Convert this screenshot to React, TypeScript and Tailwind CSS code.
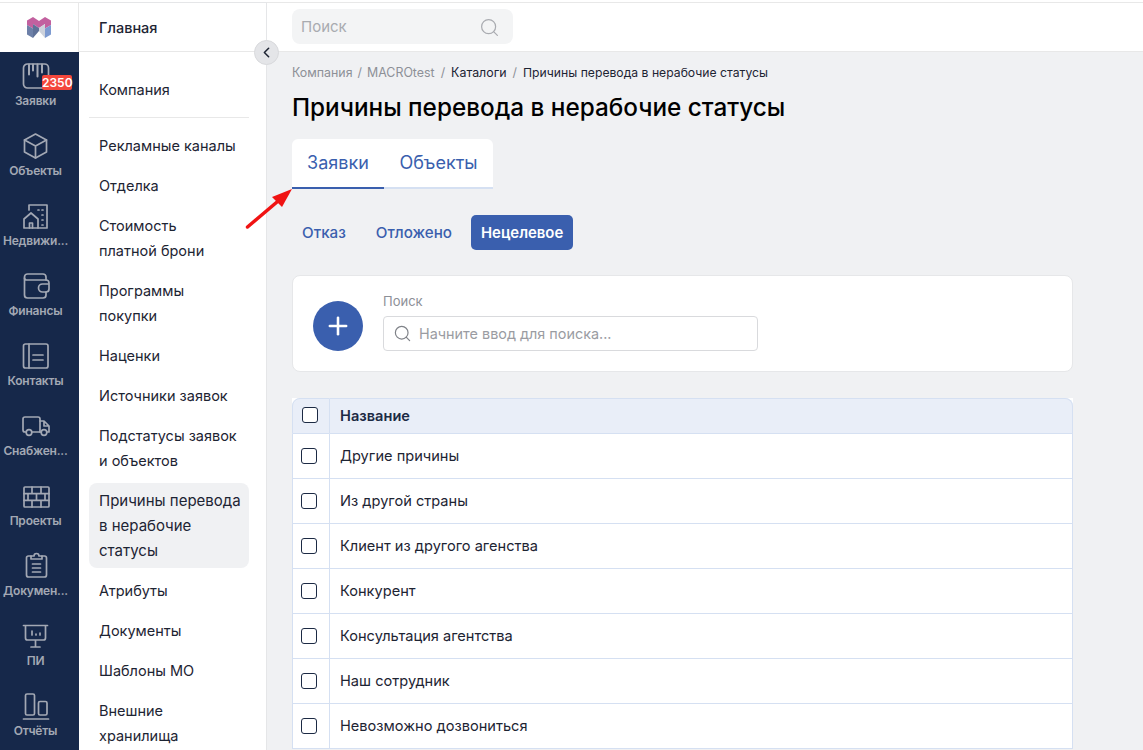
import { ChevronLeft, Plus, Search } from "lucide-react";
import type { ReactNode } from "react";

const iconProps = {
  width: 30,
  height: 30,
  viewBox: "0 0 30 30",
  fill: "none",
  stroke: "currentColor",
  strokeWidth: 1.7,
  strokeLinecap: "round" as const,
  strokeLinejoin: "round" as const,
};

const navItems: { label: string; badge?: string; icon: ReactNode }[] = [
  {
    label: "Заявки",
    badge: "2350",
    icon: (
      <svg {...iconProps}>
        <rect x="2.5" y="3" width="25" height="24" rx="4" />
        <path d="M8 3.5v10M12 3.5v6M16.5 3.5v12M21 3.5v8" strokeWidth="2" />
      </svg>
    ),
  },
  {
    label: "Объекты",
    icon: (
      <svg {...iconProps}>
        <path d="M14.5 3l11 6v12l-11 6-11-6V9z" />
        <path d="M3.5 9l11 6 11-6M14.5 15v12" />
      </svg>
    ),
  },
  {
    label: "Недвижи...",
    icon: (
      <svg {...iconProps}>
        <path d="M8 9V4h18v23H17" />
        <path d="M3 18l7-6 7 6v9H3z" />
        <path d="M8.5 27v-5h3v5M17 9h1M21 9h1M21 14h1M21 19h1M21 24h1" />
      </svg>
    ),
  },
  {
    label: "Финансы",
    icon: (
      <svg {...iconProps}>
        <path d="M25 9V6a3 3 0 0 0-3-3H6.5a3 3 0 0 0-3 3v18a3 3 0 0 0 3 3H22a3 3 0 0 0 3-3v-3" />
        <path d="M3.5 7a2 2 0 0 0 2 2H25a3 3 0 0 1 3 3v6a3 3 0 0 1-3 3h-3.500a4 4 0 0 1 0-8H28" />
      </svg>
    ),
  },
  {
    label: "Контакты",
    icon: (
      <svg {...iconProps}>
        <rect x="2.5" y="3" width="24.500" height="24" rx="2" />
        <path d="M8 3v24M12 14h10M12 19h10" />
      </svg>
    ),
  },
  {
    label: "Снабжен...",
    icon: (
      <svg {...iconProps}>
        <path d="M5 21H4a2 2 0 0 1-2-2V8a2 2 0 0 1 2-2h13a2 2 0 0 1 2 2v13h-8" />
        <path d="M19 10h4l5 5v6h-2M19 21h1M23 10v5h5" />
        <circle cx="8" cy="21.500" r="2.800" />
        <circle cx="23" cy="21.500" r="2.800" />
      </svg>
    ),
  },
  {
    label: "Проекты",
    icon: (
      <svg {...iconProps}>
        <rect x="3" y="6" width="25" height="20" rx="1" />
        <path d="M3 12.700h25M3 19.300h25M11 6v6.700M20 6v6.700M7 12.700v6.600M15.500 12.700v6.600M24 12.700v6.600M11 19.300V26M20 19.300V26" />
      </svg>
    ),
  },
  {
    label: "Докумен...",
    icon: (
      <svg {...iconProps}>
        <path d="M10 5H7.500a2 2 0 0 0-2 2v17a2 2 0 0 0 2 2h16a2 2 0 0 0 2-2V7a2 2 0 0 0-2-2H21" />
        <path d="M10 8V5h3a2.500 2.500 0 0 1 5 0h3v3z" />
        <path d="M11.500 13h8M11.500 17h8M11.500 21h8" />
      </svg>
    ),
  },
  {
    label: "ПИ",
    icon: (
      <svg {...iconProps}>
        <path d="M2.500 4.500h24M4.500 4.500v12.500a2 2 0 0 0 2 2h16a2 2 0 0 0 2-2V4.500M14.500 19v6.500M10 26h9" />
        <path d="M11 10v4M15 13v1M19 12v2" />
      </svg>
    ),
  },
  {
    label: "Отчёты",
    icon: (
      <svg {...iconProps}>
        <path d="M2.500 28h25" />
        <rect x="4.500" y="3" width="9" height="21" rx="1.500" />
        <rect x="17.500" y="10.500" width="8.500" height="13.500" rx="1.500" />
      </svg>
    ),
  },
];

const catalog = [
  ["Рекламные каналы"],
  ["Отделка"],
  ["Стоимость", "платной брони"],
  ["Программы", "покупки"],
  ["Наценки"],
  ["Источники заявок"],
  ["Подстатусы заявок", "и объектов"],
  ["Причины перевода", "в нерабочие", "статусы"],
  ["Атрибуты"],
  ["Документы"],
  ["Шаблоны МО"],
  ["Внешние", "хранилища"],
];

const reasons = [
  "Другие причины",
  "Из другой страны",
  "Клиент из другого агенства",
  "Конкурент",
  "Консультация агентства",
  "Наш сотрудник",
  "Невозможно дозвониться",
];

const Logo = () => (
  <svg width="26" height="21" viewBox="0 0 26 21">
    <path d="M1 3.500L7 0l6 4 6-4 6 3.500V8l-6 3.500V7l-6 4-6-4v4.500L1 8z" fill="#c2609f" />
    <path d="M1 8l6 3.500V21l-6-3.500z" fill="#6d80a8" />
    <path d="M7 7l6 4v3l-6 7z" fill="#5f7198" />
    <path d="M13 14l6 7V7l-6 4z" fill="#cdd2dc" />
    <path d="M19 11.500L25 8v9.500L19 21z" fill="#7d9ad0" />
  </svg>
);

const Checkbox = () => (
  <span className="block w-4 h-4 rounded-[3px] border-[1.5px] border-[#1c2a44] bg-white" />
);

export default function App() {
  return (
    <div className="relative flex h-screen w-full overflow-hidden bg-white pt-[2px] font-['Inter',sans-serif] text-[#1d2433]">
      <aside className="flex flex-col w-[79px] shrink-0">
        <div className="flex items-center justify-center h-[50px] shrink-0 bg-white border-t border-r border-[#e8e8e8]">
          <Logo />
        </div>
        <nav className="flex-1 bg-[#16284a]">
          {navItems.map((item) => (
            <div
              key={item.label}
              className="relative flex flex-col items-center h-[70px] pt-[9px] pr-[8px] text-[#a3a8b4]"
            >
              {item.icon}
              <span className="mt-[1px] text-xs leading-[18px] font-semibold tracking-[-0.2px] whitespace-nowrap">
                {item.label}
              </span>
              {item.badge && (
                <span className="absolute left-[42px] top-[23px] w-[30px] h-[15px] rounded-[2px] bg-[#f4473c] text-white text-xs leading-[15px] font-semibold text-center">
                  {item.badge}
                </span>
              )}
            </div>
          ))}
        </nav>
      </aside>

      <aside className="relative flex flex-col w-[188px] shrink-0 border-r border-t border-[#e5e6e8] text-[14.5px] leading-[25px]">
        <div className="flex items-center h-[49px] shrink-0 px-5 font-medium border-b border-[#e8e8e8]">Главная</div>
        <div className="ml-[10px] mr-[17px] px-[10px] pt-[25px] pb-[15px] border-b border-[#e8e8e8]">Компания</div>
        <ul className="flex flex-col gap-[5px] ml-[10px] mr-[17px] mt-[10px]">
          {catalog.map((lines) => (
            <li
              key={lines[0]}
              className={`px-[10px] py-[5px] rounded-lg ${lines.length === 3 ? "bg-[#f0f1f3] text-[15px]" : ""}`}
            >
              {lines.map((line) => (
                <div key={line} className="whitespace-nowrap">
                  {line}
                </div>
              ))}
            </li>
          ))}
        </ul>
        <button className="absolute right-[-13px] top-[37px] flex items-center justify-center w-[25px] h-[25px] rounded-full bg-[#e4e5e8] border border-[#d8d9dc]">
          <ChevronLeft size={17} strokeWidth={2.2} />
        </button>
      </aside>

      <div className="flex flex-col flex-1 min-w-0">
        <header className="flex items-center h-[50px] shrink-0 px-[25px] pb-[2px] bg-white border-t border-b border-[#e8e8e8]">
          <div className="flex items-center justify-between w-[221px] h-[35px] pl-[9px] pr-[13px] rounded-lg bg-[#f3f4f5] text-[15px] text-[#a9abb0]">
            <span className="pt-[2px]">Поиск</span>
            <Search size={21} strokeWidth={1.4} className="mt-[2px]" />
          </div>
        </header>

        <main className="flex-1 min-h-0 overflow-hidden bg-[#f0f1f3] pl-[25px] pr-[70px] pt-[12px]">
          <div className="flex gap-[5px] text-[12.4px] leading-[18px] text-[#8d9097]">
            <span>Компания</span>
            <span>/</span>
            <span>MACROtest</span>
            <span className="mx-[1px]">/</span>
            <span className="text-[#1d2433]">Каталоги</span>
            <span className="mx-[1px]">/</span>
            <span className="text-[12.2px] text-[#1d2433]">Причины перевода в нерабочие статусы</span>
          </div>
          <h1 className="mt-[9px] text-[24.3px] leading-[32px] font-medium text-black">
            Причины перевода в нерабочие статусы
          </h1>

          <div className="flex w-[201px] mt-[16px] rounded-t-md bg-white text-[18px] text-[#3a5fae]">
            <span className="flex items-center justify-center w-[92px] h-[50px] pb-[2px] border-b-2 border-[#3a5fae]">
              Заявки
            </span>
            <span className="flex items-center justify-center flex-1 h-[50px] pb-[2px] border-b-2 border-[#d5e0f2]">
              Объекты
            </span>
          </div>

          <div className="flex items-center gap-[10px] mt-[26px] text-[15.2px] font-medium text-[#3a5fae]">
            <span className="flex items-center h-[35px] pt-[1px] px-[10px]">Отказ</span>
            <span className="flex items-center h-[35px] pt-[1px] px-[10px]">Отложено</span>
            <span className="flex items-center h-[35px] pt-[1px] px-[10px] -ml-[1px] rounded-[5px] bg-[#3a5fae] text-[14.9px] text-white font-semibold">
              Нецелевое
            </span>
          </div>

          <section className="flex items-end gap-5 h-[97px] mt-[25px] px-5 pb-5 rounded-lg bg-white border border-[#e6e7e9]">
            <div className="flex items-center justify-center w-[50px] h-[50px] rounded-full bg-[#3a5fae] text-white">
              <Plus size={28} strokeWidth={2.2} />
            </div>
            <div>
              <div className="text-[13px] leading-[18px] text-[#8d9097]">Поиск</div>
              <div className="flex items-center gap-[7px] w-[375px] h-[35px] mt-[6px] px-[9px] rounded-[4px] border border-[#d9dadd] text-[14.4px] text-[#9a9ca2]">
                <Search size={19} strokeWidth={1.5} className="text-[#7f8288]" />
                <span>Начните ввод для поиска...</span>
              </div>
            </div>
          </section>

          <table className="w-full mt-[26px] bg-white text-[14.6px] border-separate border-spacing-0">
            <thead>
              <tr className="h-[36px] bg-[#e9eef8]">
                <th className="w-[38px] pl-[9px] rounded-tl-lg border border-[#d5e0f2]">
                  <span className="block mb-[2px]">
                    <Checkbox />
                  </span>
                </th>
                <th className="pl-[10px] pt-[1px] rounded-tr-lg border-y border-r border-[#d5e0f2] text-left font-semibold text-[#1c2a44]">
                  Название
                </th>
              </tr>
            </thead>
            <tbody>
              {reasons.map((reason) => (
                <tr key={reason} className="h-[45px]">
                  <td className="pl-[8px] border-x border-b border-[#d5e0f2]">
                    <Checkbox />
                  </td>
                  <td className="pl-[10px] pt-[1px] border-b border-r border-[#d5e0f2]">{reason}</td>
                </tr>
              ))}
            </tbody>
          </table>
        </main>
      </div>

      <svg className="absolute left-[245px] top-[187px]" width="50" height="44" viewBox="0 0 50 44">
        <path d="M2.500 40L32 15" stroke="#f01313" strokeWidth="3.500" strokeLinecap="round" />
        <path d="M47 2L27 10l10 10z" fill="#f01313" />
      </svg>
    </div>
  );
}
